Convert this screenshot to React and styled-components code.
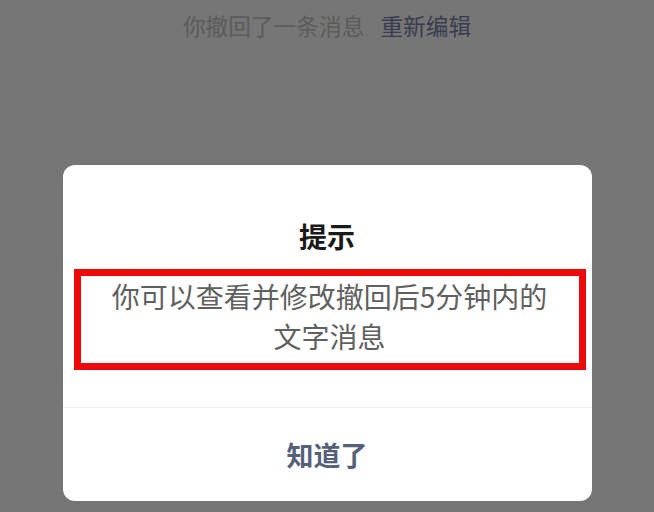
import React from "react";
import styled, { createGlobalStyle } from "styled-components";

const GlobalStyle = createGlobalStyle`
  html, body {
    margin: 0;
    padding: 0;
    background: #767676;
  }
  body {
    font-family: "Noto Sans CJK SC", "Noto Sans", sans-serif;
  }
`;

const Page = styled.div`
  width: 654px;
  height: 512px;
  background: #767676;
  display: flex;
  flex-direction: column;
  align-items: center;
  overflow: hidden;
`;

const Notice = styled.div`
  margin-top: 10px;
  height: 32px;
  display: flex;
  align-items: center;
  gap: 16px;
  font-size: 22.7px;
  line-height: 32px;
`;

const NoticeText = styled.span`
  color: ${(p) => (p.$link ? "#383c4e" : "#5b5b5b")};
`;

const Dialog = styled.div`
  margin-top: 123px;
  width: 529px;
  background: #ffffff;
  border-radius: 12px;
  display: flex;
  flex-direction: column;
  overflow: hidden;
`;

const Title = styled.div`
  padding-top: 53px;
  text-align: center;
  font-size: 28px;
  line-height: 36px;
  font-weight: 700;
  color: #1a1a1a;
`;

const Highlight = styled.div`
  margin: 15px 6px 0 11px;
  border: 7px solid #ee0a0a;
  padding: 0 0 7px;
`;

const Message = styled.p`
  margin: 0;
  text-align: center;
  font-size: 28px;
  line-height: 40px;
  color: #606060;
`;

const Footer = styled.div`
  margin-top: 37px;
  border-top: 1px solid #eeeeee;
  height: 93px;
  display: flex;
  align-items: center;
  justify-content: center;
`;

const ActionButton = styled.button`
  border: none;
  background: none;
  padding: 0;
  font-family: inherit;
  font-size: 27px;
  line-height: 36px;
  font-weight: 700;
  color: #566079;
`;

export default function App() {
  return (
    <>
      <GlobalStyle />
      <Page>
        <Notice>
          <NoticeText>你撤回了一条消息</NoticeText>
          <NoticeText $link>重新编辑</NoticeText>
        </Notice>
        <Dialog>
          <Title>提示</Title>
          <Highlight>
            <Message>
              你可以查看并修改撤回后5分钟内的
              <br />
              文字消息
            </Message>
          </Highlight>
          <Footer>
            <ActionButton>知道了</ActionButton>
          </Footer>
        </Dialog>
      </Page>
    </>
  );
}
